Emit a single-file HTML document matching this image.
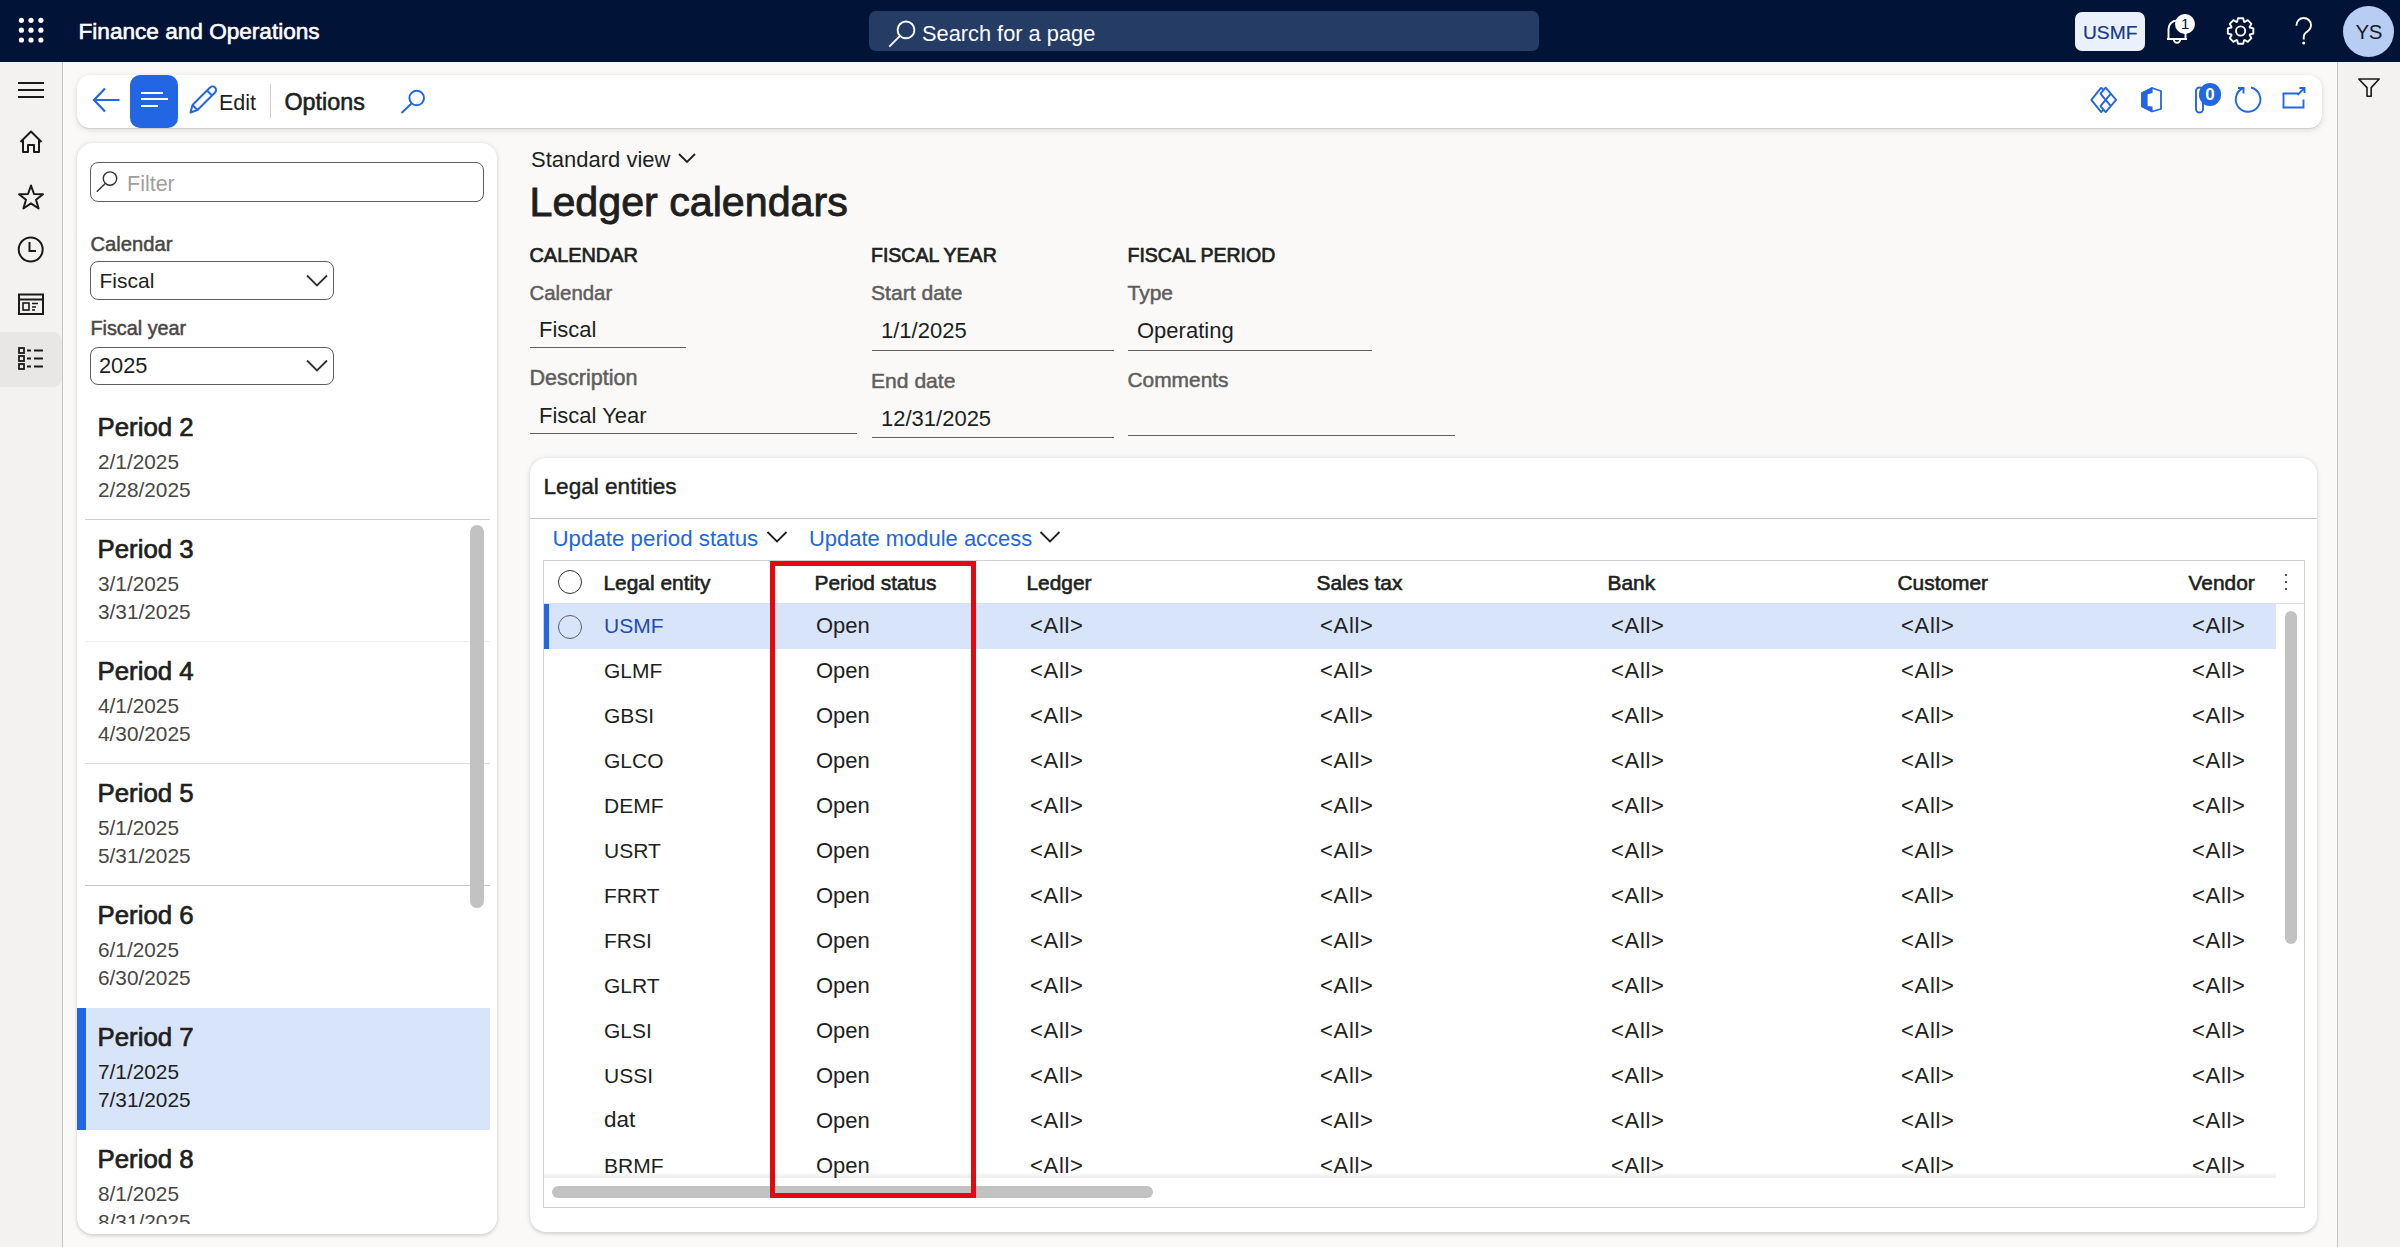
<!DOCTYPE html>
<html><head><meta charset="utf-8"><title>Ledger calendars</title>
<style>
html,body{margin:0;padding:0;width:2400px;height:1247px;overflow:hidden;background:#faf9f8;font-family:"Liberation Sans", sans-serif}
.t{position:absolute;white-space:nowrap;line-height:1;font-family:"Liberation Sans", sans-serif}
svg{overflow:visible}
</style></head><body>
<div style="position:absolute;left:0px;top:0px;width:2400px;height:62px;background:#011437"></div>
<div style="position:absolute;left:0px;top:62px;width:62px;height:1185px;background:#f3f2f1"></div>
<div style="position:absolute;left:62px;top:62px;width:1px;height:1185px;background:#c8c6c4"></div>
<div style="position:absolute;left:2337px;top:62px;width:63px;height:1185px;background:#f3f2f1"></div>
<div style="position:absolute;left:2337px;top:62px;width:1px;height:1185px;background:#c8c6c4"></div>
<svg style="position:absolute;left:0px;top:0px" width="62" height="62" viewBox="0 0 62 62" fill="none"><circle cx="21.4" cy="20.3" r="2.6" fill="#fff"/><circle cx="21.4" cy="30.2" r="2.6" fill="#fff"/><circle cx="21.4" cy="40" r="2.6" fill="#fff"/><circle cx="31" cy="20.3" r="2.6" fill="#fff"/><circle cx="31" cy="30.2" r="2.6" fill="#fff"/><circle cx="31" cy="40" r="2.6" fill="#fff"/><circle cx="40.9" cy="20.3" r="2.6" fill="#fff"/><circle cx="40.9" cy="30.2" r="2.6" fill="#fff"/><circle cx="40.9" cy="40" r="2.6" fill="#fff"/></svg>
<div class="t" style="left:78.5px;top:21.0px;font-size:22.6px;font-weight:400;color:#fff;-webkit-text-stroke:0.6px #fff;">Finance and Operations</div>
<div style="position:absolute;left:869px;top:11px;width:670px;height:40px;background:#253d65;border-radius:7px"></div>
<svg style="position:absolute;left:885px;top:16px" width="32" height="32" viewBox="0 0 32 32" fill="none"><circle cx="21" cy="13.9" r="8.4" stroke="#fff" stroke-width="1.9"/><line x1="15" y1="19.9" x2="4.3" y2="30.7" stroke="#fff" stroke-width="1.9"/></svg>
<div class="t" style="left:922px;top:22.5px;font-size:21.8px;font-weight:400;color:#fff;">Search for a page</div>
<div style="position:absolute;left:2075px;top:11.5px;width:69.5px;height:39px;background:#ebf1fc;border-radius:7px"></div>
<div class="t" style="left:2083px;top:22.9px;font-size:19.2px;font-weight:400;color:#163a84;-webkit-text-stroke:0.2px #163a84;">USMF</div>
<svg style="position:absolute;left:2160px;top:14px" width="40" height="34" viewBox="0 0 40 34" fill="none"><path d="M8.5 25 V15 a8.5 8.5 0 0 1 17 0 V25 M7 25 H27 M13.8 25.5 a3.2 3.2 0 0 0 6.4 0" stroke="#fff" stroke-width="1.9"/></svg>
<div style="position:absolute;left:2175.3px;top:14.2px;width:19.8px;height:19.8px;border-radius:50%;background:#fff;color:#011437;font-family:Liberation Sans;font-size:15px;text-align:center;line-height:20px">1</div>
<svg style="position:absolute;left:2220px;top:10px" width="42" height="42" viewBox="0 0 42 42" fill="none"><path d="M29.87 17.51 L33.34 18.42 L33.34 23.58 L29.87 24.49 L29.62 25.09 L31.44 28.18 L27.78 31.84 L24.69 30.02 L24.09 30.27 L23.18 33.74 L18.02 33.74 L17.11 30.27 L16.51 30.02 L13.42 31.84 L9.76 28.18 L11.58 25.09 L11.33 24.49 L7.86 23.58 L7.86 18.42 L11.33 17.51 L11.58 16.91 L9.76 13.82 L13.42 10.16 L16.51 11.98 L17.11 11.73 L18.02 8.26 L23.18 8.26 L24.09 11.73 L24.69 11.98 L27.78 10.16 L31.44 13.82 L29.62 16.91 Z" stroke="#fff" stroke-width="1.9" stroke-linejoin="round"/><circle cx="20.6" cy="21" r="4.6" stroke="#fff" stroke-width="1.9"/></svg>
<svg style="position:absolute;left:2290px;top:14px" width="30" height="34" viewBox="0 0 30 34" fill="none"><path d="M6.4 11.8 C6.4 7 9.7 4 13.7 4 C17.7 4 21 7 21 11.3 C21 15.5 18 17 16 18.5 C14.5 19.7 13.7 21 13.7 23 V25.5" stroke="#fff" stroke-width="1.9"/><circle cx="13.7" cy="29" r="1.5" fill="#fff"/></svg>
<div style="position:absolute;left:2342.7px;top:5.5px;width:51px;height:51px;border-radius:50%;background:#b8cdf4"></div>
<div class="t" style="left:2355.5px;top:21.8px;font-size:20.5px;font-weight:400;color:#1b1a19;letter-spacing:-0.5px;">YS</div>
<svg style="position:absolute;left:0px;top:120px" width="62" height="270" viewBox="0 0 62 270" fill="none"><path d="M20.5 22 L31 11.5 L41.5 22 M23 20 V32 H28 V25 H34 V32 H39 V20" stroke="#1b1a19" stroke-width="2" stroke-linejoin="round"/><path d="M31 65.5 L34 74 L43 74.3 L36 79.8 L38.6 88.5 L31 83.4 L23.4 88.5 L26 79.8 L19 74.3 L28 74 Z" stroke="#1b1a19" stroke-width="2" stroke-linejoin="round"/><circle cx="30.7" cy="129.5" r="12" stroke="#1b1a19" stroke-width="2"/><path d="M29.5 122 V131 H36" stroke="#1b1a19" stroke-width="2"/></svg>
<div style="position:absolute;left:0px;top:332px;width:62px;height:55px;background:#e8e7e5;border-radius:0 9px 9px 0"></div>
<svg style="position:absolute;left:0px;top:280px" width="62" height="100" viewBox="0 0 62 100" fill="none"><rect x="19" y="14.5" width="24" height="19.5" stroke="#1b1a19" stroke-width="2"/><line x1="19" y1="19.5" x2="43" y2="19.5" stroke="#1b1a19" stroke-width="2"/><rect x="23" y="23" width="6" height="7" stroke="#1b1a19" stroke-width="1.6"/><path d="M32 23.5 H38 M32 27 H36 M32 30 H35" stroke="#1b1a19" stroke-width="1.6"/><rect x="19" y="68" width="5" height="5" stroke="#1b1a19" stroke-width="1.8"/><rect x="19" y="76" width="5" height="5" stroke="#1b1a19" stroke-width="1.8"/><rect x="19" y="84" width="5" height="5" stroke="#1b1a19" stroke-width="1.8"/><path d="M27 70.5 H31 M34 70.5 H43 M27 78.5 H31 M34 78.5 H43 M27 86.5 H31 M34 86.5 H43" stroke="#1b1a19" stroke-width="1.8"/></svg>
<div style="position:absolute;left:18px;top:82px;width:26px;height:2px;background:#1b1a19"></div>
<div style="position:absolute;left:18px;top:89px;width:26px;height:2px;background:#1b1a19"></div>
<div style="position:absolute;left:18px;top:96px;width:26px;height:2px;background:#1b1a19"></div>
<svg style="position:absolute;left:2350px;top:70px" width="40" height="40" viewBox="0 0 40 40" fill="none"><path d="M8.8 9 H29.2 L21.2 17.6 V26.3 H17 V17.6 Z" stroke="#1b1a19" stroke-width="1.6" stroke-linejoin="round"/></svg>
<div style="position:absolute;left:77px;top:75px;width:2245px;height:53px;background:#fff;border-radius:13px;box-shadow:0 2px 6px rgba(0,0,0,.12),0 0.3px 0.9px rgba(0,0,0,.1)"></div>
<svg style="position:absolute;left:88px;top:82px" width="40" height="40" viewBox="0 0 40 40" fill="none"><path d="M17 6.5 L6 18 L17 29.5 M6.5 18 H31.5" stroke="#2266e3" stroke-width="2.2"/></svg>
<div style="position:absolute;left:130px;top:75px;width:48px;height:53px;background:#2266e3;border-radius:10px"></div>
<div style="position:absolute;left:141px;top:91.6px;width:22px;height:2.2px;background:#fff"></div>
<div style="position:absolute;left:141px;top:97.9px;width:27px;height:2.2px;background:#fff"></div>
<div style="position:absolute;left:141px;top:104.6px;width:17px;height:2.2px;background:#fff"></div>
<svg style="position:absolute;left:185px;top:82px" width="36" height="36" viewBox="0 0 36 36" fill="none"><path d="M5.5 30.5 L7.5 23 L25 5.5 a3 3 0 0 1 5 5 L12.5 28 Z M22 8.5 L27 13.5 M7.5 23 L12.5 28" stroke="#2266e3" stroke-width="2" stroke-linejoin="round"/></svg>
<div class="t" style="left:219px;top:92.9px;font-size:21.5px;font-weight:400;color:#201f1e;">Edit</div>
<div style="position:absolute;left:269.5px;top:84px;width:1.5px;height:34px;background:#d2d0ce"></div>
<div class="t" style="left:284.5px;top:91.4px;font-size:23.3px;font-weight:400;color:#201f1e;-webkit-text-stroke:0.6px #201f1e;">Options</div>
<svg style="position:absolute;left:396px;top:82px" width="32" height="36" viewBox="0 0 32 36" fill="none"><circle cx="20.7" cy="16" r="7.3" stroke="#2266e3" stroke-width="2"/><line x1="15.5" y1="21.5" x2="5.5" y2="31" stroke="#2266e3" stroke-width="2"/></svg>
<svg style="position:absolute;left:2086px;top:82px" width="36" height="36" viewBox="0 0 36 36" fill="none"><g stroke="#2266e3" stroke-width="1.9" stroke-linejoin="round"><path d="M15.2 5.6 L5.35 17.9 L15.2 30.1 L17 28.2 M15.2 5.6 L17 7.5"/><path d="M19.65 5.6 L30.1 17.9 L19.65 30.1 L14.45 24.2 L19.65 17.9 L14.45 11.6 Z M19.65 17.9 L24.85 11.6 M19.65 17.9 L24.85 24.2"/></g></svg>
<svg style="position:absolute;left:2136px;top:82px" width="32" height="36" viewBox="0 0 32 36" fill="none"><path d="M6 11 L16 6 L25 9 V27 L16 29.5 L6 24.5 Z" stroke="#2266e3" stroke-width="1.8" stroke-linejoin="round"/><path d="M6 11 L16 6 V10.5 L11 12 V24.5 L16 25 V29.5 L6 24.5 Z" fill="#2266e3" stroke="#2266e3" stroke-width="1.2" stroke-linejoin="round"/></svg>
<svg style="position:absolute;left:2189px;top:82px" width="32" height="36" viewBox="0 0 32 36" fill="none"><path d="M14 13 V27 a3.5 3.5 0 0 1 -7 0 V9 a3.5 3.5 0 0 1 7 0" stroke="#2266e3" stroke-width="1.9"/></svg>
<div style="position:absolute;left:2199px;top:83px;width:22px;height:22.5px;border-radius:11px;background:#2266e3;color:#fff;font-family:Liberation Sans;font-weight:bold;font-size:17px;text-align:center;line-height:23px">0</div>
<svg style="position:absolute;left:2230px;top:82px" width="36" height="36" viewBox="0 0 36 36" fill="none"><path d="M13.5 6 A12.3 12.3 0 1 0 21 5.5" stroke="#2266e3" stroke-width="1.9"/><path d="M8 6 H13.5 V11.5" stroke="#2266e3" stroke-width="1.9"/></svg>
<svg style="position:absolute;left:2278px;top:84px" width="34" height="30" viewBox="0 0 34 30" fill="none"><path d="M20 9.5 H5.5 V23.5 H25.5 V15.5 M21.5 4 H26.5 V9 M26.5 4 L19.5 11" stroke="#2266e3" stroke-width="1.9"/></svg>
<div style="position:absolute;left:77px;top:143px;width:420px;height:1091px;background:#fff;border-radius:16px;box-shadow:0 1.6px 3.6px rgba(0,0,0,.13),0 0 6px rgba(0,0,0,.07)"></div>
<div style="position:absolute;left:90px;top:162px;width:394px;height:39.5px;border:1.2px solid #605e5c;border-radius:8px;box-sizing:border-box"></div>
<svg style="position:absolute;left:94px;top:168px" width="30" height="30" viewBox="0 0 30 30" fill="none"><circle cx="16" cy="10.6" r="6.7" stroke="#323130" stroke-width="1.4"/><line x1="11.2" y1="15.4" x2="2.8" y2="23.8" stroke="#323130" stroke-width="1.4"/></svg>
<div class="t" style="left:127px;top:173.9px;font-size:21.5px;font-weight:400;color:#a19f9d;">Filter</div>
<div class="t" style="left:90.5px;top:233.6px;font-size:20.2px;font-weight:400;color:#484644;-webkit-text-stroke:0.5px #484644;">Calendar</div>
<div style="position:absolute;left:90px;top:261px;width:244px;height:38.5px;border:1.2px solid #605e5c;border-radius:8px;box-sizing:border-box"></div>
<div class="t" style="left:99.5px;top:270.4px;font-size:21px;font-weight:400;color:#201f1e;">Fiscal</div>
<svg style="position:absolute;left:300px;top:268px" width="32" height="24" viewBox="0 0 32 24" fill="none"><path d="M7 7.5 L17 17.5 L27 7.5" stroke="#323130" stroke-width="1.8"/></svg>
<div class="t" style="left:90.5px;top:318.6px;font-size:19.8px;font-weight:400;color:#484644;-webkit-text-stroke:0.5px #484644;">Fiscal year</div>
<div style="position:absolute;left:90px;top:346.5px;width:244px;height:38.5px;border:1.2px solid #605e5c;border-radius:8px;box-sizing:border-box"></div>
<div class="t" style="left:99px;top:355.2px;font-size:21.8px;font-weight:400;color:#201f1e;">2025</div>
<svg style="position:absolute;left:300px;top:353px" width="32" height="24" viewBox="0 0 32 24" fill="none"><path d="M7 7.5 L17 17.5 L27 7.5" stroke="#323130" stroke-width="1.8"/></svg>
<div style="position:absolute;left:77px;top:397px;width:420px;height:826.5px;overflow:hidden">
<div class="t" style="left:20.5px;top:18.0px;font-size:25.8px;color:#201f1e;-webkit-text-stroke:0.7px #201f1e">Period 2</div>
<div class="t" style="left:21px;top:55.0px;font-size:20.8px;color:#484644">2/1/2025</div>
<div class="t" style="left:21px;top:83.1px;font-size:20.8px;color:#484644">2/28/2025</div>
<div style="position:absolute;left:7.5px;top:122.4px;width:405.5px;height:1px;background:#d2d0ce"></div>
<div class="t" style="left:20.5px;top:140.0px;font-size:25.8px;color:#201f1e;-webkit-text-stroke:0.7px #201f1e">Period 3</div>
<div class="t" style="left:21px;top:177.0px;font-size:20.8px;color:#484644">3/1/2025</div>
<div class="t" style="left:21px;top:205.1px;font-size:20.8px;color:#484644">3/31/2025</div>
<div style="position:absolute;left:7.5px;top:244.4px;width:405.5px;height:1px;background:#f0efee"></div>
<div class="t" style="left:20.5px;top:262.0px;font-size:25.8px;color:#201f1e;-webkit-text-stroke:0.7px #201f1e">Period 4</div>
<div class="t" style="left:21px;top:299.0px;font-size:20.8px;color:#484644">4/1/2025</div>
<div class="t" style="left:21px;top:327.1px;font-size:20.8px;color:#484644">4/30/2025</div>
<div style="position:absolute;left:7.5px;top:366.4px;width:405.5px;height:1px;background:#e1dfdd"></div>
<div class="t" style="left:20.5px;top:384.0px;font-size:25.8px;color:#201f1e;-webkit-text-stroke:0.7px #201f1e">Period 5</div>
<div class="t" style="left:21px;top:421.0px;font-size:20.8px;color:#484644">5/1/2025</div>
<div class="t" style="left:21px;top:449.1px;font-size:20.8px;color:#484644">5/31/2025</div>
<div style="position:absolute;left:7.5px;top:488.4px;width:405.5px;height:1px;background:#c8c6c4"></div>
<div class="t" style="left:20.5px;top:506.0px;font-size:25.8px;color:#201f1e;-webkit-text-stroke:0.7px #201f1e">Period 6</div>
<div class="t" style="left:21px;top:543.0px;font-size:20.8px;color:#484644">6/1/2025</div>
<div class="t" style="left:21px;top:571.1px;font-size:20.8px;color:#484644">6/30/2025</div>
<div style="position:absolute;left:0;top:610.9px;width:413px;height:122px;background:#d8e4fa"></div>
<div style="position:absolute;left:0;top:610.9px;width:9px;height:122px;background:#2266e3"></div>
<div class="t" style="left:20.5px;top:628.0px;font-size:25.8px;color:#201f1e;-webkit-text-stroke:0.7px #201f1e">Period 7</div>
<div class="t" style="left:21px;top:665.0px;font-size:20.8px;color:#201f1e">7/1/2025</div>
<div class="t" style="left:21px;top:693.1px;font-size:20.8px;color:#201f1e">7/31/2025</div>
<div class="t" style="left:20.5px;top:750.0px;font-size:25.8px;color:#201f1e;-webkit-text-stroke:0.7px #201f1e">Period 8</div>
<div class="t" style="left:21px;top:787.0px;font-size:20.8px;color:#484644">8/1/2025</div>
<div class="t" style="left:21px;top:815.1px;font-size:20.8px;color:#484644">8/31/2025</div>
</div>
<div style="position:absolute;left:470px;top:525px;width:14px;height:383px;background:#c2c2c2;border-radius:7px"></div>
<div class="t" style="left:531px;top:149.0px;font-size:22px;font-weight:400;color:#201f1e;">Standard view</div>
<svg style="position:absolute;left:674px;top:148px" width="26" height="20" viewBox="0 0 26 20" fill="none"><path d="M5 6 L13 14 L21 6" stroke="#201f1e" stroke-width="1.8"/></svg>
<div class="t" style="left:529.5px;top:182.2px;font-size:41.2px;font-weight:400;color:#201f1e;-webkit-text-stroke:0.9px #201f1e;">Ledger calendars</div>
<div class="t" style="left:529.5px;top:245.8px;font-size:19.9px;font-weight:400;color:#201f1e;-webkit-text-stroke:0.7px #201f1e;">CALENDAR</div>
<div class="t" style="left:871px;top:246.1px;font-size:19.5px;font-weight:400;color:#201f1e;-webkit-text-stroke:0.7px #201f1e;">FISCAL YEAR</div>
<div class="t" style="left:1127.5px;top:246.1px;font-size:19.5px;font-weight:400;color:#201f1e;-webkit-text-stroke:0.7px #201f1e;">FISCAL PERIOD</div>
<div class="t" style="left:529.5px;top:282.9px;font-size:20.4px;font-weight:400;color:#605e5c;-webkit-text-stroke:0.5px #605e5c;">Calendar</div>
<div class="t" style="left:539px;top:318.5px;font-size:22px;font-weight:400;color:#201f1e;">Fiscal</div>
<div style="position:absolute;left:530px;top:347px;width:156px;height:1.3px;background:#605e5c"></div>
<div class="t" style="left:529.5px;top:366.9px;font-size:21.6px;font-weight:400;color:#605e5c;-webkit-text-stroke:0.5px #605e5c;">Description</div>
<div class="t" style="left:539px;top:405.0px;font-size:22px;font-weight:400;color:#201f1e;">Fiscal Year</div>
<div style="position:absolute;left:530px;top:433px;width:327px;height:1.3px;background:#605e5c"></div>
<div class="t" style="left:871px;top:282.3px;font-size:21.1px;font-weight:400;color:#605e5c;-webkit-text-stroke:0.5px #605e5c;">Start date</div>
<div class="t" style="left:881px;top:319.5px;font-size:22px;font-weight:400;color:#201f1e;">1/1/2025</div>
<div style="position:absolute;left:871.5px;top:349.5px;width:242.5px;height:1.3px;background:#605e5c"></div>
<div class="t" style="left:871px;top:369.8px;font-size:21.1px;font-weight:400;color:#605e5c;-webkit-text-stroke:0.5px #605e5c;">End date</div>
<div class="t" style="left:881px;top:407.5px;font-size:22px;font-weight:400;color:#201f1e;">12/31/2025</div>
<div style="position:absolute;left:871.5px;top:436.5px;width:242.5px;height:1.3px;background:#605e5c"></div>
<div class="t" style="left:1127.5px;top:282.4px;font-size:21px;font-weight:400;color:#605e5c;-webkit-text-stroke:0.5px #605e5c;">Type</div>
<div class="t" style="left:1137px;top:319.5px;font-size:22px;font-weight:400;color:#201f1e;">Operating</div>
<div style="position:absolute;left:1128px;top:349.5px;width:243.5px;height:1.3px;background:#605e5c"></div>
<div class="t" style="left:1127.5px;top:369.9px;font-size:20.9px;font-weight:400;color:#605e5c;-webkit-text-stroke:0.5px #605e5c;">Comments</div>
<div style="position:absolute;left:1128px;top:434.5px;width:327px;height:1.3px;background:#605e5c"></div>
<div style="position:absolute;left:530px;top:458px;width:1787px;height:774px;background:#fff;border-radius:16px;box-shadow:0 1.6px 3.6px rgba(0,0,0,.13),0 0 6px rgba(0,0,0,.07)"></div>
<div class="t" style="left:543.5px;top:476.3px;font-size:22.6px;font-weight:400;color:#201f1e;-webkit-text-stroke:0.4px #201f1e;">Legal entities</div>
<div style="position:absolute;left:530px;top:517.5px;width:1787px;height:1.3px;background:#c8c6c4"></div>
<div class="t" style="left:552.5px;top:527.6px;font-size:22.3px;font-weight:400;color:#2266e3;">Update period status</div>
<svg style="position:absolute;left:762px;top:526px" width="30" height="24" viewBox="0 0 30 24" fill="none"><path d="M5.5 6 L15 15.5 L24.5 6" stroke="#201f1e" stroke-width="1.8"/></svg>
<div class="t" style="left:809px;top:527.9px;font-size:21.95px;font-weight:400;color:#2266e3;">Update module access</div>
<svg style="position:absolute;left:1035px;top:526px" width="30" height="24" viewBox="0 0 30 24" fill="none"><path d="M5.5 6 L15 15.5 L24.5 6" stroke="#201f1e" stroke-width="1.8"/></svg>
<div style="position:absolute;left:543px;top:560px;width:1761.5px;height:647.5px;border:1px solid #d2d0ce;box-sizing:border-box"></div>
<div style="position:absolute;left:544px;top:603px;width:1760px;height:1px;background:#e1dfdd"></div>
<div style="position:absolute;left:558px;top:570px;width:24px;height:24px;border:1.2px solid #323130;border-radius:50%;box-sizing:border-box"></div>
<div class="t" style="left:603.5px;top:573.2px;font-size:20.9px;font-weight:400;color:#201f1e;-webkit-text-stroke:0.6px #201f1e;">Legal entity</div>
<div class="t" style="left:814.5px;top:573.2px;font-size:20.9px;font-weight:400;color:#201f1e;-webkit-text-stroke:0.6px #201f1e;">Period status</div>
<div class="t" style="left:1026.5px;top:573.2px;font-size:20.9px;font-weight:400;color:#201f1e;-webkit-text-stroke:0.6px #201f1e;">Ledger</div>
<div class="t" style="left:1316.5px;top:573.2px;font-size:20.9px;font-weight:400;color:#201f1e;-webkit-text-stroke:0.6px #201f1e;">Sales tax</div>
<div class="t" style="left:1607.5px;top:573.2px;font-size:20.9px;font-weight:400;color:#201f1e;-webkit-text-stroke:0.6px #201f1e;">Bank</div>
<div class="t" style="left:1897.5px;top:573.2px;font-size:20.9px;font-weight:400;color:#201f1e;-webkit-text-stroke:0.6px #201f1e;">Customer</div>
<div class="t" style="left:2188.5px;top:573.2px;font-size:20.9px;font-weight:400;color:#201f1e;-webkit-text-stroke:0.6px #201f1e;">Vendor</div>
<div style="position:absolute;left:2284.8px;top:573.8px;width:2.6px;height:2.6px;background:#201f1e;border-radius:50%"></div>
<div style="position:absolute;left:2284.8px;top:580.8px;width:2.6px;height:2.6px;background:#201f1e;border-radius:50%"></div>
<div style="position:absolute;left:2284.8px;top:587.8px;width:2.6px;height:2.6px;background:#201f1e;border-radius:50%"></div>
<div style="position:absolute;left:544px;top:604px;width:1732px;height:574px;overflow:hidden">
<div style="position:absolute;left:0;top:0;width:1732px;height:44.5px;background:#d8e4fa"></div>
<div style="position:absolute;left:0;top:0;width:5px;height:44.5px;background:#2266e3"></div>
<div style="position:absolute;left:14px;top:11px;width:24px;height:24px;border:1.2px solid #605e5c;border-radius:50%;box-sizing:border-box"></div>
<div class="t" style="left:60px;top:11.2px;font-size:21px;color:#1f4bb3">USMF</div>
<div class="t" style="left:272px;top:11.1px;font-size:22px;color:#201f1e">Open</div>
<div class="t" style="left:486px;top:11.1px;font-size:22px;color:#201f1e;letter-spacing:0.7px">&lt;All&gt;</div>
<div class="t" style="left:776px;top:11.1px;font-size:22px;color:#201f1e;letter-spacing:0.7px">&lt;All&gt;</div>
<div class="t" style="left:1067px;top:11.1px;font-size:22px;color:#201f1e;letter-spacing:0.7px">&lt;All&gt;</div>
<div class="t" style="left:1357px;top:11.1px;font-size:22px;color:#201f1e;letter-spacing:0.7px">&lt;All&gt;</div>
<div class="t" style="left:1648px;top:11.1px;font-size:22px;color:#201f1e;letter-spacing:0.7px">&lt;All&gt;</div>
<div class="t" style="left:60px;top:56.2px;font-size:21px;color:#201f1e">GLMF</div>
<div class="t" style="left:272px;top:56.1px;font-size:22px;color:#201f1e">Open</div>
<div class="t" style="left:486px;top:56.1px;font-size:22px;color:#201f1e;letter-spacing:0.7px">&lt;All&gt;</div>
<div class="t" style="left:776px;top:56.1px;font-size:22px;color:#201f1e;letter-spacing:0.7px">&lt;All&gt;</div>
<div class="t" style="left:1067px;top:56.1px;font-size:22px;color:#201f1e;letter-spacing:0.7px">&lt;All&gt;</div>
<div class="t" style="left:1357px;top:56.1px;font-size:22px;color:#201f1e;letter-spacing:0.7px">&lt;All&gt;</div>
<div class="t" style="left:1648px;top:56.1px;font-size:22px;color:#201f1e;letter-spacing:0.7px">&lt;All&gt;</div>
<div class="t" style="left:60px;top:101.2px;font-size:21px;color:#201f1e">GBSI</div>
<div class="t" style="left:272px;top:101.1px;font-size:22px;color:#201f1e">Open</div>
<div class="t" style="left:486px;top:101.1px;font-size:22px;color:#201f1e;letter-spacing:0.7px">&lt;All&gt;</div>
<div class="t" style="left:776px;top:101.1px;font-size:22px;color:#201f1e;letter-spacing:0.7px">&lt;All&gt;</div>
<div class="t" style="left:1067px;top:101.1px;font-size:22px;color:#201f1e;letter-spacing:0.7px">&lt;All&gt;</div>
<div class="t" style="left:1357px;top:101.1px;font-size:22px;color:#201f1e;letter-spacing:0.7px">&lt;All&gt;</div>
<div class="t" style="left:1648px;top:101.1px;font-size:22px;color:#201f1e;letter-spacing:0.7px">&lt;All&gt;</div>
<div class="t" style="left:60px;top:146.2px;font-size:21px;color:#201f1e">GLCO</div>
<div class="t" style="left:272px;top:146.1px;font-size:22px;color:#201f1e">Open</div>
<div class="t" style="left:486px;top:146.1px;font-size:22px;color:#201f1e;letter-spacing:0.7px">&lt;All&gt;</div>
<div class="t" style="left:776px;top:146.1px;font-size:22px;color:#201f1e;letter-spacing:0.7px">&lt;All&gt;</div>
<div class="t" style="left:1067px;top:146.1px;font-size:22px;color:#201f1e;letter-spacing:0.7px">&lt;All&gt;</div>
<div class="t" style="left:1357px;top:146.1px;font-size:22px;color:#201f1e;letter-spacing:0.7px">&lt;All&gt;</div>
<div class="t" style="left:1648px;top:146.1px;font-size:22px;color:#201f1e;letter-spacing:0.7px">&lt;All&gt;</div>
<div class="t" style="left:60px;top:191.2px;font-size:21px;color:#201f1e">DEMF</div>
<div class="t" style="left:272px;top:191.1px;font-size:22px;color:#201f1e">Open</div>
<div class="t" style="left:486px;top:191.1px;font-size:22px;color:#201f1e;letter-spacing:0.7px">&lt;All&gt;</div>
<div class="t" style="left:776px;top:191.1px;font-size:22px;color:#201f1e;letter-spacing:0.7px">&lt;All&gt;</div>
<div class="t" style="left:1067px;top:191.1px;font-size:22px;color:#201f1e;letter-spacing:0.7px">&lt;All&gt;</div>
<div class="t" style="left:1357px;top:191.1px;font-size:22px;color:#201f1e;letter-spacing:0.7px">&lt;All&gt;</div>
<div class="t" style="left:1648px;top:191.1px;font-size:22px;color:#201f1e;letter-spacing:0.7px">&lt;All&gt;</div>
<div class="t" style="left:60px;top:236.2px;font-size:21px;color:#201f1e">USRT</div>
<div class="t" style="left:272px;top:236.1px;font-size:22px;color:#201f1e">Open</div>
<div class="t" style="left:486px;top:236.1px;font-size:22px;color:#201f1e;letter-spacing:0.7px">&lt;All&gt;</div>
<div class="t" style="left:776px;top:236.1px;font-size:22px;color:#201f1e;letter-spacing:0.7px">&lt;All&gt;</div>
<div class="t" style="left:1067px;top:236.1px;font-size:22px;color:#201f1e;letter-spacing:0.7px">&lt;All&gt;</div>
<div class="t" style="left:1357px;top:236.1px;font-size:22px;color:#201f1e;letter-spacing:0.7px">&lt;All&gt;</div>
<div class="t" style="left:1648px;top:236.1px;font-size:22px;color:#201f1e;letter-spacing:0.7px">&lt;All&gt;</div>
<div class="t" style="left:60px;top:281.2px;font-size:21px;color:#201f1e">FRRT</div>
<div class="t" style="left:272px;top:281.1px;font-size:22px;color:#201f1e">Open</div>
<div class="t" style="left:486px;top:281.1px;font-size:22px;color:#201f1e;letter-spacing:0.7px">&lt;All&gt;</div>
<div class="t" style="left:776px;top:281.1px;font-size:22px;color:#201f1e;letter-spacing:0.7px">&lt;All&gt;</div>
<div class="t" style="left:1067px;top:281.1px;font-size:22px;color:#201f1e;letter-spacing:0.7px">&lt;All&gt;</div>
<div class="t" style="left:1357px;top:281.1px;font-size:22px;color:#201f1e;letter-spacing:0.7px">&lt;All&gt;</div>
<div class="t" style="left:1648px;top:281.1px;font-size:22px;color:#201f1e;letter-spacing:0.7px">&lt;All&gt;</div>
<div class="t" style="left:60px;top:326.2px;font-size:21px;color:#201f1e">FRSI</div>
<div class="t" style="left:272px;top:326.1px;font-size:22px;color:#201f1e">Open</div>
<div class="t" style="left:486px;top:326.1px;font-size:22px;color:#201f1e;letter-spacing:0.7px">&lt;All&gt;</div>
<div class="t" style="left:776px;top:326.1px;font-size:22px;color:#201f1e;letter-spacing:0.7px">&lt;All&gt;</div>
<div class="t" style="left:1067px;top:326.1px;font-size:22px;color:#201f1e;letter-spacing:0.7px">&lt;All&gt;</div>
<div class="t" style="left:1357px;top:326.1px;font-size:22px;color:#201f1e;letter-spacing:0.7px">&lt;All&gt;</div>
<div class="t" style="left:1648px;top:326.1px;font-size:22px;color:#201f1e;letter-spacing:0.7px">&lt;All&gt;</div>
<div class="t" style="left:60px;top:371.2px;font-size:21px;color:#201f1e">GLRT</div>
<div class="t" style="left:272px;top:371.1px;font-size:22px;color:#201f1e">Open</div>
<div class="t" style="left:486px;top:371.1px;font-size:22px;color:#201f1e;letter-spacing:0.7px">&lt;All&gt;</div>
<div class="t" style="left:776px;top:371.1px;font-size:22px;color:#201f1e;letter-spacing:0.7px">&lt;All&gt;</div>
<div class="t" style="left:1067px;top:371.1px;font-size:22px;color:#201f1e;letter-spacing:0.7px">&lt;All&gt;</div>
<div class="t" style="left:1357px;top:371.1px;font-size:22px;color:#201f1e;letter-spacing:0.7px">&lt;All&gt;</div>
<div class="t" style="left:1648px;top:371.1px;font-size:22px;color:#201f1e;letter-spacing:0.7px">&lt;All&gt;</div>
<div class="t" style="left:60px;top:416.2px;font-size:21px;color:#201f1e">GLSI</div>
<div class="t" style="left:272px;top:416.1px;font-size:22px;color:#201f1e">Open</div>
<div class="t" style="left:486px;top:416.1px;font-size:22px;color:#201f1e;letter-spacing:0.7px">&lt;All&gt;</div>
<div class="t" style="left:776px;top:416.1px;font-size:22px;color:#201f1e;letter-spacing:0.7px">&lt;All&gt;</div>
<div class="t" style="left:1067px;top:416.1px;font-size:22px;color:#201f1e;letter-spacing:0.7px">&lt;All&gt;</div>
<div class="t" style="left:1357px;top:416.1px;font-size:22px;color:#201f1e;letter-spacing:0.7px">&lt;All&gt;</div>
<div class="t" style="left:1648px;top:416.1px;font-size:22px;color:#201f1e;letter-spacing:0.7px">&lt;All&gt;</div>
<div class="t" style="left:60px;top:461.2px;font-size:21px;color:#201f1e">USSI</div>
<div class="t" style="left:272px;top:461.1px;font-size:22px;color:#201f1e">Open</div>
<div class="t" style="left:486px;top:461.1px;font-size:22px;color:#201f1e;letter-spacing:0.7px">&lt;All&gt;</div>
<div class="t" style="left:776px;top:461.1px;font-size:22px;color:#201f1e;letter-spacing:0.7px">&lt;All&gt;</div>
<div class="t" style="left:1067px;top:461.1px;font-size:22px;color:#201f1e;letter-spacing:0.7px">&lt;All&gt;</div>
<div class="t" style="left:1357px;top:461.1px;font-size:22px;color:#201f1e;letter-spacing:0.7px">&lt;All&gt;</div>
<div class="t" style="left:1648px;top:461.1px;font-size:22px;color:#201f1e;letter-spacing:0.7px">&lt;All&gt;</div>
<div class="t" style="left:60px;top:504.9px;font-size:22.5px;color:#201f1e">dat</div>
<div class="t" style="left:272px;top:506.1px;font-size:22px;color:#201f1e">Open</div>
<div class="t" style="left:486px;top:506.1px;font-size:22px;color:#201f1e;letter-spacing:0.7px">&lt;All&gt;</div>
<div class="t" style="left:776px;top:506.1px;font-size:22px;color:#201f1e;letter-spacing:0.7px">&lt;All&gt;</div>
<div class="t" style="left:1067px;top:506.1px;font-size:22px;color:#201f1e;letter-spacing:0.7px">&lt;All&gt;</div>
<div class="t" style="left:1357px;top:506.1px;font-size:22px;color:#201f1e;letter-spacing:0.7px">&lt;All&gt;</div>
<div class="t" style="left:1648px;top:506.1px;font-size:22px;color:#201f1e;letter-spacing:0.7px">&lt;All&gt;</div>
<div class="t" style="left:60px;top:551.2px;font-size:21px;color:#201f1e">BRMF</div>
<div class="t" style="left:272px;top:551.1px;font-size:22px;color:#201f1e">Open</div>
<div class="t" style="left:486px;top:551.1px;font-size:22px;color:#201f1e;letter-spacing:0.7px">&lt;All&gt;</div>
<div class="t" style="left:776px;top:551.1px;font-size:22px;color:#201f1e;letter-spacing:0.7px">&lt;All&gt;</div>
<div class="t" style="left:1067px;top:551.1px;font-size:22px;color:#201f1e;letter-spacing:0.7px">&lt;All&gt;</div>
<div class="t" style="left:1357px;top:551.1px;font-size:22px;color:#201f1e;letter-spacing:0.7px">&lt;All&gt;</div>
<div class="t" style="left:1648px;top:551.1px;font-size:22px;color:#201f1e;letter-spacing:0.7px">&lt;All&gt;</div>
</div>
<div style="position:absolute;left:544px;top:1171.5px;width:1732px;height:6.5px;background:linear-gradient(rgba(0,0,0,0),rgba(0,0,0,.075))"></div>
<div style="position:absolute;left:551.5px;top:1186px;width:601.5px;height:12px;background:#c2c2c2;border-radius:6px"></div>
<div style="position:absolute;left:2284.5px;top:611px;width:12.5px;height:333px;background:#c2c2c2;border-radius:6px"></div>
<div style="position:absolute;left:770px;top:561px;width:205.5px;height:636.5px;border:5px solid #e6090b;box-sizing:border-box"></div>
</body></html>
